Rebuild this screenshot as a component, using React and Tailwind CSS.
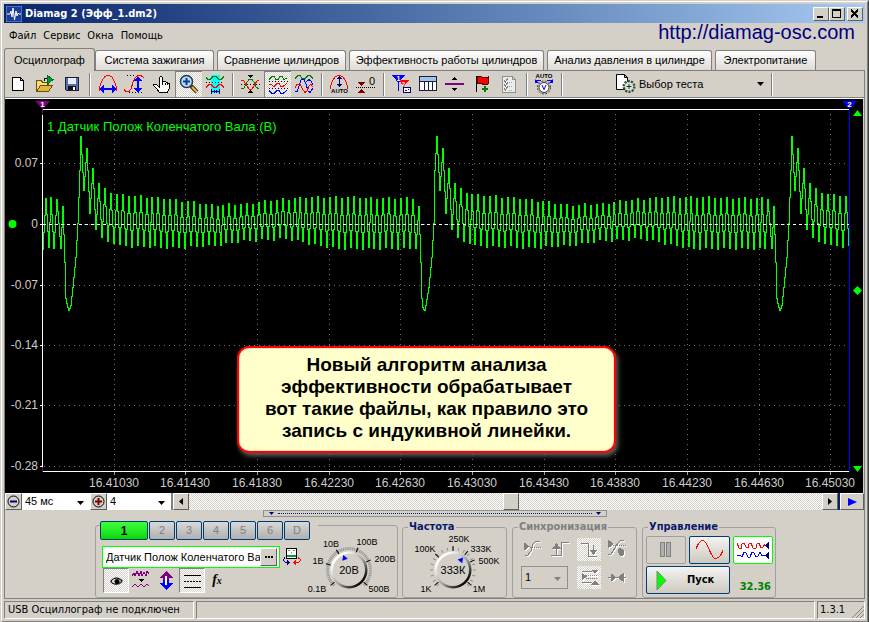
import { useState } from 'react'
import { clsx } from 'clsx'

/* ─── Signal ─── */
const CYCLE = 355.5
const STEP = 5.92

// Crank sensor pulse, dx from the main peak
const PULSE = [
  [-20.7, 248], [-18, 206], [-16, 262], [-15, 298], [-13.6, 307], [-12, 310], [-10.4, 305], [-8, 287], [-5.3, 257], [-3, 223], [-1.7, 170],
  [0, 136], [3, 190], [6, 148], [9, 213], [12, 168], [15, 229], [18, 183], [21, 237], [24, 188],
  [27, 241], [30, 193], [33, 243], [35.6, 194],
]
const TOP = [[35, 194], [90, 199], [130, 205], [165, 204], [200, 199], [230, 197], [335, 198]]
const BOTTOM = [[35, 245], [95, 247], [130, 245], [165, 240], [205, 238], [235, 244], [260, 248], [335, 248]]

const envelope = (keys, x) => {
  const i = Math.max(1, keys.findIndex(k => k[0] >= x))
  const [x0, y0] = keys[i - 1]
  const [x1, y1] = keys[i]
  return y0 + ((y1 - y0) * (x - x0)) / (x1 - x0)
}

const buildWave = () => {
  const extremes = []
  ;[-274.2, 81.3, 436.8, 792.3].forEach(start => {
    PULSE.forEach(([dx, y]) => extremes.push([start + dx, y]))
    for (let k = 0; k < 50; k++) {
      const low = 35.6 + STEP * k + 3
      const high = 35.6 + STEP * (k + 1)
      if (high > CYCLE - 22) break
      extremes.push([start + low, envelope(BOTTOM, low) + (k % 3) - 1])
      extremes.push([start + high, envelope(TOP, high) + ((k * 2) % 3) - 1])
    }
  })
  // One column per pixel, the way the scope rasterises its samples
  let d = ''
  for (let i = 1; i < extremes.length; i++) {
    const x0 = Math.round(extremes[i - 1][0])
    const x1 = Math.round(extremes[i][0])
    const y0 = extremes[i - 1][1]
    const y1 = extremes[i][1]
    for (let x = x0 + 1; x <= x1; x++) {
      const y = y0 + ((y1 - y0) * (x - x0)) / (x1 - x0)
      if (x >= 43) d += d ? `H${x - 0.5}V${Math.round(y) + 0.5}` : `M${x - 0.5} ${Math.round(y) + 0.5}`
    }
  }
  return d
}

const WAVE = buildWave()
const TIMES = [
  [114, '16.41030'], [185, '16.41430'], [257, '16.41830'], [329, '16.42230'], [400, '16.42630'], [472, '16.43030'],
  [544, '16.43430'], [615, '16.43830'], [687, '16.44230'], [759, '16.44630'], [830, '16.45030'],
]
const VOLTS = [[163, '0.07'], [224, '0'], [285, '-0.07'], [345, '-0.14'], [405, '-0.21'], [466, '-0.28']]

const Oscillogram = () => (
  <svg viewBox="5 99 858 394" className="block w-full bg-black font-['Liberation_Sans',Arial,sans-serif]" role="img" aria-label="Осциллограмма">
    <defs>
      <clipPath id="plot-area">
        <rect x="43" y="110" width="806" height="361" />
      </clipPath>
    </defs>
    <g stroke="#707070" strokeDasharray="1 4" shapeRendering="crispEdges">
      {TIMES.map(([x]) => <line key={x} x1={x + 0.5} x2={x + 0.5} y1="114" y2="470" />)}
      {VOLTS.map(([y]) => <line key={y} x1="44" x2="848" y1={y + 0.5} y2={y + 0.5} />)}
    </g>
    <g fill="none" shapeRendering="crispEdges">
      <path d={WAVE} stroke="#00ff00" clipPath="url(#plot-area)" />
      <path d="M43 224.5H849" stroke="#fff" strokeDasharray="3 3" />
      <path d="M42.5 110V472M42 109.5H849M42 471.5H849" stroke="#fff" />
      <path d="M40 163.5h3M40 224.5h3M40 285.5h3M40 345.5h3M40 405.5h3M40 466.5h3" stroke="#fff" />
      <path d={TIMES.map(([x]) => `M${x + 0.5} 472v3`).join('')} stroke="#a0a0a0" />
      <path d="M42.5 106V115M42.5 467V472" stroke="#800080" />
      <path d="M849.5 106V472" stroke="#0000ff" />
    </g>
    <path d="M35 101H50L42.5 109Z" fill="#800080" />
    <path d="M842 101H857L849.5 109Z" fill="#0000ff" />
    <text x="42.5" y="107" fontSize="8" fontWeight="700" fill="#fff" textAnchor="middle">1</text>
    <text x="849.5" y="107" fontSize="8" fontWeight="700" fill="#fff" textAnchor="middle">2</text>
    <g fill="#00ff00">
      <circle cx="12.5" cy="224" r="4" />
      <path d="M853 116H862L857.500 110ZM853 466H862L857.500 472ZM853 290.500L857.500 286L862 290.500L857.500 295Z" />
      <text x="47" y="131" fontSize="13">1 Датчик Полож Коленчатого Вала (В)</text>
    </g>
    <g fill="#cccccc" fontSize="12">
      {VOLTS.map(([y, label]) => <text key={label} x="38" y={y + 4} textAnchor="end">{label}</text>)}
      {TIMES.map(([x, label]) => <text key={label} x={x} y="487" textAnchor="middle">{label}</text>)}
    </g>
  </svg>
)

/* ─── Toolbar icons, 27x26 each ─── */
const Icon = ({ children, w = 27, h = 26, smooth }) => (
  <svg width={w} height={h} viewBox={`0 0 ${w} ${h}`} fill="none" shapeRendering={smooth ? 'auto' : 'crispEdges'} className="block shrink-0">
    {children}
  </svg>
)

const NewIcon = () => (
  <Icon><path d="M7.500 5.500H15.500L18.500 8.500V18.500H7.500ZM15.500 5.500V8.500H18.500" fill="#fff" stroke="#000" /></Icon>
)
const OpenIcon = () => (
  <Icon>
    <path d="M4.500 19.500V8.500H9.500L10.500 10.500H16.500V19.500Z" fill="#f5dc82" stroke="#6b5200" />
    <path d="M4.500 19.500L8.500 13.500H20.500L16.500 19.500Z" fill="#e0b53c" stroke="#6b5200" />
    <path d="M12 9Q12 6 15 6" stroke="#000" />
    <path d="M15.500 3.500V12L21 7.500Z" fill="#009933" stroke="#00661a" />
  </Icon>
)
const SaveIcon = () => (
  <Icon>
    <path d="M6.500 5.500H19.500V18.500H7.500L6.500 17.500Z" fill="#5b6ea8" stroke="#1c1c3c" />
    <path d="M9 6H17V12H9Z" fill="#e6ecfa" />
    <path d="M9 14H17V18H9Z" fill="#111" />
    <path d="M14 15H16V18H14Z" fill="#fff" />
  </Icon>
)
const PeriodIcon = () => (
  <Icon>
    <path d="M5.500 19V16L6.500 12L8.500 8L10.500 5L13 3.500H15L18 5L19.500 8L21.500 12L22.500 16V19" stroke="#f00" />
    <path d="M8 17H20" stroke="#00f" strokeWidth="2" />
    <path d="M5 17L10 13V21ZM23 17L18 13V21Z" fill="#00f" />
  </Icon>
)
const AmplitudeIcon = () => (
  <Icon>
    <path d="M6 3.500H14M8 20.500H22" stroke="#000" strokeDasharray="1 2" />
    <path d="M3 17.500L5 19.500H8L10 17L12 10L14 6L17 3.500H20L23 6" stroke="#f00" />
    <path d="M17 8V17" stroke="#00f" strokeWidth="2" />
    <path d="M17 4L21 9H13ZM17 21L21 16H13Z" fill="#00f" />
  </Icon>
)
const HandIcon = () => (
  <Icon>
    <path
      d="M11.500 15V5.500L12.500 4H13.500L14.500 5.500V10L17 9.500L19.500 10.500L21.500 12V16L19.500 20.500H11.500L8.500 16.500L5.500 13.500V12L8 12L11.500 15Z"
      fill="#fff" stroke="#000"
    />
    <path d="M14.500 10V13M17.500 10.500V13M19.500 11V13" stroke="#000" />
  </Icon>
)
const ZoomIcon = () => (
  <Icon smooth>
    <path d="M15 14L21 20" stroke="#4a3010" strokeWidth="4" />
    <path d="M16 15L21 20" stroke="#e8b85c" strokeWidth="2" />
    <circle cx="10.500" cy="9.500" r="6" fill="#b9dcf8" stroke="#28364e" strokeWidth="1.500" />
    <path d="M10.500 6V13M7 9.500H14" stroke="#0a3c9c" strokeWidth="2" />
  </Icon>
)
const MeasureIcon = () => (
  <Icon>
    <path d="M9 3H18V21H9Z" fill="#0ff" />
    <path d="M4 10.500H22" stroke="#000" strokeDasharray="1 2" />
    <path d="M4 5.500L6 7.500H8L11 4.500H14L17 7.500H19L22 4.500" stroke="#008000" />
    <path d="M4 15.500L7 12.500H9L12 15.500H14L17 12.500H19L22 15.500" stroke="#f00" />
    <path d="M9.500 17V22M17.500 17V22M10 19.500H17M12.500 18V21M14.500 18V21" stroke="#000080" />
  </Icon>
)
const AlignIcon = () => (
  <Icon>
    <path d="M4 12.500H23" stroke="#000" strokeDasharray="1 2" />
    <path d="M4 17L7 16L10 10L12 7.500H15L17 10L19 15L22 17" stroke="#008000" />
    <path d="M4 8.500L7 9L10 14L12 17H15L17 14L20 9L22 8" stroke="#f00" />
    <path d="M11 3H16L13.500 6ZM11 21H16L13.500 18Z" fill="#000" />
  </Icon>
)
const SplitIcon = () => (
  <Icon>
    <path d="M4 9.500H23M4 16.500H23" stroke="#000" strokeDasharray="1 2" />
    <path d="M4 7.500L7 4.500H9L11 7.500H13L15 4.500H17L19 7.500L22 6" stroke="#008000" />
    <path d="M4 12.500H6L9 14.500L12 11.500H14L16 14.500H18L22 11.500" stroke="#f00" />
    <path d="M4 18.500L7 21.500H9L12 18.500H14L16 21.500H18L22 18.500" stroke="#00f" />
  </Icon>
)
const OverlayIcon = () => (
  <Icon>
    <path d="M4 6.500L7 3.500H9L11 6.500H14L17 3.500H19L22 6.500" stroke="#008000" />
    <path d="M4 20L6 19.500L8 14L10 8L13 7.500L15 12L17 19L19 20.500L22 16" stroke="#00f" />
    <path d="M4 16L6 12.500H9L12 18L14 20.500L16 19L18 14L20 12.500L22 15" stroke="#f00" />
    <path d="M15 10L18 7.500L20 9L22 13" stroke="#00f" />
  </Icon>
)
const AutoScaleIcon = () => (
  <Icon>
    <path d="M4.500 17V14L6.500 9L9 5L12 3.500H14L17 5L19.500 9L21.500 14V17" stroke="#f00" />
    <path d="M13.500 6V14" stroke="#000080" />
    <path d="M11 7H16L13.500 4ZM11 12H16L13.500 15Z" fill="#000080" />
    <text x="13.500" y="21" fontSize="6" fontWeight="700" fill="#000" textAnchor="middle">AUTO</text>
  </Icon>
)
const ZeroIcon = () => (
  <Icon>
    <path d="M3 15.500H23" stroke="#000" strokeDasharray="1 1" />
    <path d="M4 10H12L8 14ZM4 21H12L8 17Z" fill="#800000" />
    <text x="19" y="13" fontSize="11" fill="#000" textAnchor="middle">0</text>
  </Icon>
)
const MarkersIcon = () => (
  <Icon>
    <path d="M10.500 10V19" stroke="#00f" />
    <path d="M4 3H17L10.500 11Z" fill="#00f" />
    <path d="M11 8H21L15.500 15Z" fill="#f00" />
    <text x="10.500" y="9" fontSize="7" fontWeight="700" fill="#fff" textAnchor="middle">1</text>
    <text x="15.500" y="14" fontSize="6" fontWeight="700" fill="#fff" textAnchor="middle">2</text>
    <path d="M15.500 15.500H22.500V20.500H15.500Z" fill="#fff" stroke="#000080" />
    <path d="M17 18.500H19M20 17.500H21" stroke="#000080" />
  </Icon>
)
const TableIcon = () => (
  <Icon>
    <path d="M4.500 4.500H21.500V18.500H4.500Z" fill="#fff" stroke="#1c1c3c" />
    <path d="M5 5H21V9H5Z" fill="#9fc4ec" />
    <path d="M5 9.500H21M9.500 9V18M13.500 9V18M17.500 9V18" stroke="#1c1c3c" />
  </Icon>
)
const DividerIcon = () => (
  <Icon>
    <path d="M3 12H22" stroke="#800080" strokeWidth="2" />
    <path d="M10 8H15L12.500 5ZM10 16H15L12.500 19Z" fill="#000" />
  </Icon>
)
const FlagIcon = () => (
  <Icon>
    <path d="M7.500 4V20" stroke="#000" />
    <path d="M8 5L12 4L14 6L19 5V12L15 13L12 11L8 12Z" fill="#f00" stroke="#500" />
    <path d="M16 14V20M13 17H19" stroke="#008000" strokeWidth="2" />
  </Icon>
)
const ChecklistIcon = () => (
  <Icon>
    <path d="M6.500 4.500H16.500L19.500 7.500V20.500H6.500Z" fill="#ececec" stroke="#909090" />
    <path d="M16.500 4.500V7.500H19.500" stroke="#909090" />
    <path d="M8 8L9.500 10L12 6M8 12L9.500 14L12 10M8 16L9.500 18L12 14" stroke="#808080" />
    <path d="M13 10.500H17M13 14.500H17M13 18.500H17" stroke="#a0a0a0" strokeDasharray="1 1" />
  </Icon>
)
const AutoTimerIcon = () => (
  <Icon smooth>
    <text x="13" y="6" fontSize="6" fontWeight="700" fill="#000" textAnchor="middle">AUTO</text>
    <path d="M5 8.500H10M16 8.500H21" stroke="#00f" />
    <path d="M4 7V11H8ZM22 7V11H18Z" fill="#00f" />
    <circle cx="13" cy="15.500" r="6.500" stroke="#303030" strokeWidth="1" strokeDasharray="2 1.400" />
    <circle cx="13" cy="15.500" r="5" fill="#fff" stroke="#303030" />
    <path d="M11 13L13 17.500L15 13" stroke="#00f" />
  </Icon>
)
const TestIcon = () => (
  <Icon w={22} h={26} smooth>
    <path d="M1.500 3.500H9.500L12.500 6.500V18.500H1.500ZM9.500 3.500V6.500H12.500" fill="#fff" stroke="#000" />
    <circle cx="14" cy="15.500" r="5" fill="#cfe3d4" stroke="#3a4a3e" strokeWidth="3" strokeDasharray="2 1.100" />
    <circle cx="14" cy="15.500" r="4" fill="#d8e8dc" />
    <path d="M14 13V18M11.500 15.500H16.500" stroke="#203024" />
  </Icon>
)

const TOOL_GROUPS = [
  [['Новый', NewIcon], ['Открыть', OpenIcon], ['Сохранить', SaveIcon]],
  [['Период', PeriodIcon], ['Амплитуда', AmplitudeIcon], ['Рука', HandIcon], ['Лупа', ZoomIcon, true], ['Измерение', MeasureIcon]],
  [['Совместить', AlignIcon], ['Разделить', SplitIcon, true], ['Наложить', OverlayIcon]],
  [['Автомасштаб', AutoScaleIcon], ['Ноль', ZeroIcon]],
  [['Маркеры', MarkersIcon], ['Таблица', TableIcon], ['Разделитель', DividerIcon], ['Флаг', FlagIcon], ['Список', ChecklistIcon]],
  [['Авто', AutoTimerIcon]],
]

const HATCH = 'bg-[repeating-conic-gradient(#ffffff_0_25%,#d4d0c8_0_50%)] bg-[length:2px_2px]'
const RAISED = 'border border-t-white border-l-white border-r-[#606060] border-b-[#606060] bg-[#d4d0c8]'

const Separator = () => <div className="mx-[3px] h-[23px] w-[2px] border-l border-r border-l-[#808080] border-r-white" />

const Toolbar = () => (
  <div className="flex h-[27px] items-center border-b border-[#808080]">
    {TOOL_GROUPS.map((group, i) => (
      <div key={i} className="flex items-center">
        {group.map(([label, Glyph, on]) => (
          <button
            key={label}
            aria-label={label}
            aria-pressed={!!on}
            className={clsx('h-[26px] w-[27px] overflow-hidden border-t', on ? 'border-l border-[#808080]' : 'border-transparent', on && HATCH)}
          >
            <Glyph />
          </button>
        ))}
        <Separator />
      </div>
    ))}
    <button className="ml-[49px] flex items-center gap-[2px] whitespace-nowrap">
      <TestIcon />
      <span>Выбор теста</span>
      <svg width="7" height="4" className="ml-[52px]" aria-hidden="true"><path d="M0 0H7L3.500 4Z" /></svg>
    </button>
    <div className="ml-1"><Separator /></div>
  </div>
)

/* ─── Window chrome ─── */
const CaptionButton = ({ label, children }) => (
  <button aria-label={label} className={clsx('flex h-[14px] w-4 items-center justify-center', RAISED)}>
    <svg width="12" height="11" viewBox="0 0 12 11" fill="none" stroke="#000" shapeRendering="crispEdges">{children}</svg>
  </button>
)

const TitleBar = () => (
  <header className="flex h-[19px] items-center bg-linear-to-r from-[#0a246a] to-[#a6caf0] pl-[2px] pr-[2px] text-white">
    <svg width="16" height="16" viewBox="0 0 16 16" className="mr-[3px]">
      <rect width="16" height="16" fill="#1c3c9c" stroke="#7fa0e0" />
      <path d="M1 8H4L5 5L6 11L7 2L8.500 14L10 5L11 10L12 7L13 8H15" fill="none" stroke="#fff" />
    </svg>
    <h1 className="flex-1 pt-px font-['DejaVu_Sans_Condensed','Noto_Sans',sans-serif] text-[11px] font-bold">Diamag 2 (Эфф_1.dm2)</h1>
    <CaptionButton label="Свернуть"><path d="M2 9H8" strokeWidth="2" /></CaptionButton>
    <CaptionButton label="Развернуть"><path d="M1.500 1.500H9.500V9.500H1.500ZM1 2.500H10" /></CaptionButton>
    <span className="w-[2px]" />
    <CaptionButton label="Закрыть"><path d="M2 1.500L9 9.500M9 1.500L2 9.500" strokeWidth="2" /></CaptionButton>
  </header>
)

const MenuBar = () => (
  <nav className="flex h-[25px] items-start gap-[7px] pl-[5px] pr-[10px] font-['DejaVu_Sans_Condensed','Noto_Sans',sans-serif]">
    {['Файл', 'Сервис', 'Окна', 'Помощь'].map(item => <button key={item} className="pt-[5px]">{item}</button>)}
    <a href="http://diamag-osc.com" className="ml-auto font-['Liberation_Sans',Arial,sans-serif] text-[20px] leading-[18px] text-[#000080]">
      http://diamag-osc.com
    </a>
  </nav>
)

const TABS = [
  ['Осциллограф', 'w-[91px]'],
  ['Система зажигания', 'w-[119px]'],
  ['Сравнение цилиндров', 'w-[129px]'],
  ['Эффективность работы цилиндров', 'w-[195px]'],
  ['Анализ давления в цилиндре', 'w-[165px]'],
  ['Электропитание', 'w-[101px]'],
]

const Tabs = ({ active, onSelect }) => (
  <div role="tablist" className="flex h-[23px] items-end border-b border-[#808080]">
    {TABS.map(([tab, width], i) => (
      <button
        key={tab}
        role="tab"
        aria-selected={active === i}
        onClick={() => onSelect(i)}
        className={clsx(
          'whitespace-nowrap rounded-t-[3px] border border-b-0 border-[#808080]',
          width,
          active === i ? '-mb-px h-[23px] bg-[#d4d0c8]' : 'mr-[3px] h-5 bg-linear-to-b from-white to-[#dedbd4]',
        )}
      >
        {tab}
      </button>
    ))}
  </div>
)

/* ─── Scroll row ─── */
const Combo = ({ label, value, className, disabled }) => (
  <div className={clsx('relative', className)}>
    <select aria-label={label} disabled={disabled} className="block h-full w-full appearance-none pl-[3px] text-[11px]">
      <option>{value}</option>
    </select>
    <svg width="7" height="4" className="pointer-events-none absolute right-[6px] top-1/2 -mt-[1px]" aria-hidden="true">
      <path d="M0 0H7L3.500 4Z" fill={disabled ? '#808080' : '#000'} />
    </svg>
  </div>
)

const ZoomButton = ({ label, plus }) => (
  <button aria-label={label} className={clsx('flex w-[17px] items-center justify-center', RAISED)}>
    <svg width="13" height="13" viewBox="0 0 13 13" fill="none">
      <circle cx="6.500" cy="6.500" r="5.500" stroke="#000" />
      <path d={plus ? 'M3 6.500H10M6.500 3V10' : 'M3 6.500H10'} stroke={plus ? '#800000' : '#000080'} strokeWidth="2" />
    </svg>
  </button>
)

const ScrollRow = () => (
  <div className="flex h-[17px] bg-[#d4d0c8]">
    <ZoomButton label="Уменьшить" />
    <Combo label="Развёртка" value="45 мс" className="w-[68px] bg-white" />
    <ZoomButton label="Увеличить" plus />
    <Combo label="Масштаб" value="4" className="w-[64px] bg-white" />
    <div className="w-[2px] bg-[#808080]" />
    <button aria-label="Назад" className={clsx('flex w-4 items-center justify-center', RAISED)}>
      <svg width="4" height="7"><path d="M4 0V7L0 3.500Z" /></svg>
    </button>
    <div className={clsx('flex flex-1', HATCH)}>
      <div className="w-1/2" />
      <div className={clsx('-ml-[3px] w-4', RAISED)} />
    </div>
    <button aria-label="Вперёд" className={clsx('flex w-4 items-center justify-center', RAISED)}>
      <svg width="4" height="7"><path d="M0 0V7L4 3.500Z" /></svg>
    </button>
    <div className="w-[2px] bg-[#0a246a]" />
    <button aria-label="Воспроизвести" className={clsx('flex w-6 items-center justify-center', RAISED)}>
      <svg width="9" height="8"><path d="M0 0V8L9 4Z" fill="#00f" /></svg>
    </button>
  </div>
)

/* ─── Knobs ─── */
const Knob = ({ w, cx, value, labels, ticks, minor, pointer }) => (
  <svg width={w} height="70" viewBox={`0 0 ${w} 70`} className="block shrink-0 font-['Liberation_Sans',Arial,sans-serif]">
    <defs>
      <linearGradient id={`rim-${w}`} x1="0" y1="0" x2="1" y2="1">
        <stop offset="0.200" stopColor="#fff" />
        <stop offset="0.550" stopColor="#a0a0a0" />
        <stop offset="0.850" stopColor="#000" />
      </linearGradient>
    </defs>
    {Array.from({ length: minor + 1 }, (_, i) => (
      <line
        key={i} x1={cx + 20} x2={cx + 23} y1="44" y2="44" stroke="#909090"
        transform={`rotate(${135 + (270 * i) / minor} ${cx} 44)`}
      />
    ))}
    {ticks.map(a => (
      <line key={a} x1={cx + 19} x2={cx + 24} y1="44" y2="44" stroke="#000" transform={`rotate(${a} ${cx} 44)`} />
    ))}
    <circle cx={cx} cy="44" r="18.500" fill={`url(#rim-${w})`} />
    <circle cx={cx} cy="44" r="16" fill="#d4d0c8" />
    <path d="M11 -3L16 0L11 3Z" fill="#00f" transform={`translate(${cx} 44) rotate(${pointer})`} />
    <text x={cx} y="48" fontSize="11" textAnchor="middle">{value}</text>
    <g fontSize="9" textAnchor="middle">
      {labels.map(([x, y, t]) => <text key={t} x={x} y={y}>{t}</text>)}
    </g>
  </svg>
)

/* ─── Channel panel ─── */
const ChannelPanel = () => {
  const [channel, setChannel] = useState('1')
  return (
    <div className="mt-[8px] flex h-[73px] w-[303px] rounded-[3px] border border-[#a0a0a0]">
      <div className="-mt-[5px] w-[210px] shrink-0 pl-1">
        <div className="flex w-[218px] gap-px bg-[#d4d0c8]">
          {['1', '2', '3', '4', '5', '6', 'D'].map(id => (
            <button
              key={id}
              onClick={() => setChannel(id)}
              className={clsx(
                'h-[19px] rounded-[2px] border border-[#003c74]',
                channel === id
                  ? 'w-12 bg-linear-to-b from-[#3cff3c] to-[#00d800] text-[12px] font-bold text-black'
                  : 'w-[26px] bg-linear-to-b from-[#d8d8d8] to-[#b0b0b0] text-[#808080]',
              )}
            >
              {id}
            </button>
          ))}
        </div>
        <div className="mt-[6px] flex items-center gap-[2px] pl-[2px]">
          <div className="flex h-[22px] w-[178px] shrink-0 border border-[#00ff00] bg-white">
            <input aria-label="Имя канала" defaultValue="Датчик Полож Коленчатого Вала" className="w-[157px] pl-[3px] outline-none" />
            <button aria-label="Выбрать датчик" className={clsx('my-px flex w-[17px] items-center justify-center', RAISED)}>
              <svg width="8" height="2"><path d="M0 0h2v2H0zM3 0h2v2H3zM6 0h2v2H6z" /></svg>
            </button>
          </div>
          <button aria-label="Подключение" className="shrink-0">
            <Icon w={20} h={20}>
              <path d="M4.500 1.500H14.500V11.500H4.500Z" fill="#fff" stroke="#000" />
              <path d="M6 3.500H8M11 3.500H13M9 5.500H10" stroke="#808080" />
              <path d="M5 8H14V10H5Z" fill="#00a030" />
              <path d="M3 10.500L1.500 12.500V13.500L3.500 15.500H5" stroke="#00008b" />
              <path d="M5 13L8 15.500L5 18Z" fill="#00008b" />
              <path d="M16 10.500L18.500 12.500V13.500L16.500 15.500H14" stroke="#f00" />
              <path d="M14 13L11 15.500L14 18Z" fill="#f00" />
            </Icon>
          </button>
        </div>
        <div className="flex pl-[3px]">
          <button aria-label="Показать канал" className={clsx('h-[25px] w-[26px] border border-[#808080] border-b-white border-r-white', HATCH)}>
            <Icon w={24} h={23} smooth>
              <path d="M6 12Q12 5 19 11L18 14Q13 18 7 14Z" fill="#808080" />
              <path d="M7 12Q12 6 18 12Q13 17 8 14Z" fill="#e0e0e0" stroke="#000" />
              <circle cx="13" cy="12.500" r="2.500" fill="#000" />
            </Icon>
          </button>
          <button aria-label="Фильтр">
            <Icon w={25} h={25}>
              <path d="M3 8L5 5L6 8L8 3L10 8L12 3L13 8L15 4L17 8L18 3L20 6" stroke="#800080" />
              <path d="M9 11H16L12.500 14Z" fill="#000" />
              <path d="M3 19L6 16L9 19L12 16L15 19L18 16L20 18" stroke="#800080" />
            </Icon>
          </button>
          <button aria-label="Инвертировать">
            <Icon w={25} h={25}>
              <path d="M12 3L19 10H5ZM9 10H15V13H9Z" fill="#800080" />
              <path d="M12 22L19 15H5ZM9 12H15V15H9Z" fill="#00f" />
              <path d="M12 8V17" stroke="#fff" strokeWidth="2" />
            </Icon>
          </button>
          <button aria-label="Линии" className={clsx('h-[25px] w-[26px] border border-[#808080] border-b-white border-r-white', HATCH)}>
            <Icon w={24} h={23}>
              <path d="M4 6.500H21M4 18.500H21" stroke="#000" />
              <path d="M4 12.500H21" stroke="#000" strokeDasharray="2 1" />
            </Icon>
          </button>
          <button className="w-[24px] font-['Liberation_Serif',serif] text-[14px] font-bold italic leading-[20px]">
            f<span className="text-[10px]">x</span>
          </button>
        </div>
      </div>
      <Knob
        w={91} cx={43} value="20В" minor={54} pointer={-111}
        ticks={[140, 195, 238, 292, 335, 40]}
        labels={[[25, 21, '10В'], [61, 19, '100В'], [12, 38, '1В'], [79, 36, '200В'], [11, 66, '0.1В'], [73, 66, '500В']]}
      />
    </div>
  )
}

/* ─── Group boxes ─── */
const Group = ({ title, className, disabled, children }) => (
  <fieldset className={clsx('mt-[3px] h-[78px] rounded-[3px] border border-[#a0a0a0]', className)}>
    <legend
      className={clsx(
        "ml-[5px] px-px font-['DejaVu_Sans_Condensed','Noto_Sans',sans-serif] text-[11px] font-bold leading-[14px]",
        disabled ? 'text-[#808080]' : 'text-[#0a1a6a]',
      )}
    >
      {title}
    </legend>
    {children}
  </fieldset>
)

const FrequencyPanel = () => (
  <Group title="Частота" className="ml-[4px] w-[105px]">
    <div className="-mt-[8px]">
      <Knob
        w={103} cx={50} value="333К" minor={18} pointer={-51}
        ticks={[140, 222, 270, 308, 335, 40]}
        labels={[[22, 26, '100K'], [56, 16, '250K'], [78, 26, '333K'], [86, 38, '500K'], [23, 66, '1K'], [76, 66, '1M']]}
      />
    </div>
  </Group>
)

const SyncButton = ({ label, on, children }) => (
  <button disabled aria-label={label} className={clsx('h-[23px] w-6', on && HATCH)}>
    <Icon w={24} h={23}>
      <g transform="translate(1 1)" stroke="#fff" fill="#fff">{children}</g>
      <g stroke="#808080" fill="#808080">{children}</g>
    </Icon>
  </button>
)

const SyncPanel = () => (
  <Group title="Синхронизация" disabled className="ml-[5px] w-[125px]">
    <div className="flex flex-col gap-[5px] pl-2 pt-[4px]">
      <div className="flex gap-[4px]">
        <SyncButton label="Уровень">
          <path d="M3 5L8 8.500L3 12Z" />
          <path d="M9 9.500H20" strokeDasharray="1 1" />
          <path d="M4 17H7L10 13L12 6L15 3H19" fill="none" />
        </SyncButton>
        <SyncButton label="Фронт">
          <path d="M2 17.500H12.500V4.500H20M7.500 8V17" fill="none" />
          <path d="M4 10H11L7.500 6Z" />
        </SyncButton>
        <SyncButton label="Спад" on>
          <path d="M4 5.500H11.500V18.500H20M16.500 7V14" fill="none" />
          <path d="M13 12H20L16.500 16Z" />
        </SyncButton>
        <SyncButton label="Ручная">
          <path d="M3 2L8 6L3 10Z" />
          <path d="M8 7.500H21" strokeDasharray="1 1" />
          <path d="M3 16H6L10 10L13 5L16 2H19" fill="none" />
          <path d="M13 12L15 10L19 13L18 17H15Z" />
        </SyncButton>
      </div>
      <div className="flex gap-[4px]">
        <div className="flex w-[52px] pr-[5px]">
          <Combo label="Канал синхронизации" value="1" disabled className="h-[23px] w-full border border-[#909090]" />
        </div>
        <SyncButton label="Разнести" on>
          <path d="M5 7L9 10.500L5 14Z" />
          <path d="M5 5.500H15M5 16.500H15" fill="none" />
          <path d="M9 9.500H21M9 12.500H21" strokeDasharray="1 1" fill="none" />
          <path d="M15 4H21L18 7ZM15 18H21L18 15Z" />
        </SyncButton>
        <SyncButton label="Свести">
          <path d="M3 11.500H21" fill="none" />
          <path d="M6 8L11 11.500L6 15ZM18 8L13 11.500L18 15Z" />
        </SyncButton>
      </div>
    </div>
  </Group>
)

const ControlPanel = () => (
  <Group title="Управление" className="ml-[5px] w-[134px]">
    <div className="grid grid-cols-[40px_41px_40px] gap-x-[3px] gap-y-[2px] pl-[3px] pt-[2px]">
      <button disabled aria-label="Пауза" className="flex h-[28px] items-center justify-center rounded-[2px] border border-[#a0a0a0]">
        <svg width="12" height="16" fill="#b0b0b0" stroke="#808080" shapeRendering="crispEdges"><path d="M.5 .5h4v14h-4zM6.500 .5h4v14h-4z" /></svg>
      </button>
      <button aria-label="Синус" className="flex h-[28px] items-center justify-center rounded-[2px] border border-[#003c74] bg-linear-to-b from-[#f4f3f0] to-[#cdc9c0]">
        <svg width="30" height="20" fill="none" stroke="#f00" shapeRendering="crispEdges"><path d="M1 9Q7 -7 13 7T21 18Q25 19 28 10" /></svg>
      </button>
      <button aria-label="Два канала" className="flex h-[28px] items-center justify-center rounded-[2px] border border-[#00ff00] bg-white">
        <svg width="34" height="20" fill="none" shapeRendering="crispEdges">
          <path d="M1 3L3 8L5 9L6 4L8 3L10 7L12 8L13 4L15 3L17 8L20 8L21 4L23 3L25 8L27 7L29 4" stroke="#f00" />
          <path d="M1 15H4L6 17L8 12L10 13L12 17L14 17L16 12L18 13L20 17L22 16L24 12L26 16L29 15" stroke="#00f" />
          <path d="M33 2V9L29 5.500ZM33 12V19L29 15.500Z" fill="#000080" />
        </svg>
      </button>
      <button className="col-span-2 flex h-[28px] items-center gap-5 rounded-[2px] border border-[#003c74] bg-linear-to-b from-[#f4f3f0] to-[#cdc9c0] pl-[9px] font-['DejaVu_Sans_Condensed','Noto_Sans',sans-serif] font-bold">
        <svg width="11" height="19"><path d="M1 0V19L10 9.500Z" fill="#00ff00" stroke="#808080" /></svg>
        Пуск
      </button>
      <output className="self-end pr-[2px] text-right font-['DejaVu_Sans_Condensed','Noto_Sans',sans-serif] font-bold leading-[14px] text-[#008000]">32.36</output>
    </div>
  </Group>
)

const SUNKEN = 'border border-l-[#808080] border-t-[#808080] border-r-white border-b-white'

export default function App() {
  const [tab, setTab] = useState(0)

  return (
    <div className="w-full border border-b-[#404040] border-l-[#d4d0c8] border-r-[#404040] border-t-[#d4d0c8] bg-[#d4d0c8] font-['Liberation_Sans',Arial,sans-serif] text-[11px] text-black">
      <div className="border border-b-[#808080] border-l-white border-r-[#808080] border-t-white p-[2px]">
        <TitleBar />
        <MenuBar />
        <Tabs active={tab} onSelect={setTab} />
        <main className="border-x border-b border-[#808080]">
          <Toolbar />
          <div className="relative border-t border-white pr-px">
            <Oscillogram />
            <div className="absolute left-[27%] top-[247px] whitespace-nowrap rounded-[12px] border-2 border-[#ff0000] bg-[#ffffcc] px-[26px] pb-[9px] pt-[6px] text-center text-[19px] font-bold leading-[22px] shadow-[inset_0_0_0_1px_#ffe0c0,2px_3px_5px_#606060]">
              Новый алгоритм анализа<br />
              эффективности обрабатывает<br />
              вот такие файлы, как правило это<br />
              запись с индукивной линейки.
            </div>
          </div>
          <ScrollRow />
          <div className="mx-auto flex h-[7px] w-[344px] items-center justify-between border border-[#909090] px-[5px]">
            <svg width="5" height="3"><path d="M0 0H5L2.500 3Z" fill="#000080" /></svg>
            <span className="mx-1 flex-1 border-t border-dotted border-[#0a246a]" />
            <svg width="5" height="3"><path d="M0 0H5L2.500 3Z" fill="#000080" /></svg>
          </div>
          <div className="flex h-[81px] pl-[90px]">
            <ChannelPanel />
            <FrequencyPanel />
            <SyncPanel />
            <ControlPanel />
          </div>
        </main>
        <footer className="mt-[2px] flex h-[18px] gap-[2px] font-['DejaVu_Sans_Condensed','Noto_Sans',sans-serif] leading-[16px]">
          <div className={clsx('w-[190px] pl-[3px]', SUNKEN)}>USB Осциллограф не подключен</div>
          <div className={clsx('flex-1', SUNKEN)} />
          <div className={clsx('flex w-[48px] items-end justify-between pl-[2px]', SUNKEN)}>
            1.3.1
            <svg width="12" height="12" stroke="#808080"><path d="M0 12L12 0M4 12L12 4M8 12L12 8" /></svg>
          </div>
        </footer>
      </div>
    </div>
  )
}
